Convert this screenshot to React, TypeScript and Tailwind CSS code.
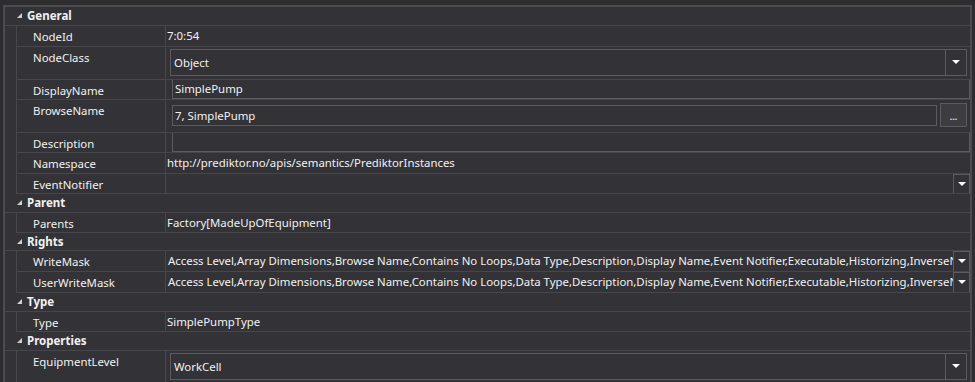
import React from 'react'

const font = { fontFamily: '"Segoe UI", "Noto Sans", "Open Sans", sans-serif' }

function Expander() {
  return (
    <svg width="6" height="6" viewBox="0 0 6 6" className="shrink-0">
      <polygon points="5,0 5,5 0,5" fill="#d0d0d0" />
    </svg>
  )
}

function Arrow() {
  return (
    <svg width="8" height="5" viewBox="0 0 8 5">
      <polygon points="0,0 8,0 4,4" fill="#ffffff" />
    </svg>
  )
}

function Category({ title, h = 'h-[19px]' }: { title: string; h?: string }) {
  return (
    <div className={`flex items-center ${h} border-b border-[#46464b]`}>
      <div className="w-[12px] flex justify-end ml-[6px]">
        <Expander />
      </div>
      <span className="ml-[4px] text-[11.5px] font-bold text-[#f1f1f1]">{title}</span>
    </div>
  )
}

function Row({ label, h = 'h-[21px]', children }: { label: string; h?: string; children?: React.ReactNode }) {
  return (
    <div className={`flex ${h}`}>
      <div className="w-[12px] shrink-0 border-r border-[#46464b]" />
      <div className="flex flex-1 min-w-0 border-b border-[#46464b]">
        <div className="w-[149px] shrink-0 border-r border-[#46464b] pl-[16px] pt-[2px] text-[11.4px] text-[#f1f1f1]">
          {label}
        </div>
        <div className="flex flex-1 min-w-0 overflow-hidden">{children}</div>
      </div>
    </div>
  )
}

function Plain({ text }: { text: string }) {
  return <div className="pl-[1px] flex items-center text-[11.4px] text-[#f1f1f1] whitespace-nowrap">{text}</div>
}

function Combo({ text }: { text: string }) {
  return (
    <div className="flex flex-1 ml-[4px] mr-[3px] mt-[2px] h-[27px] border border-[#5c5c60]">
      <div className="flex-1 flex items-center pl-[3px] pt-[1px] text-[11.4px] text-[#f1f1f1]">{text}</div>
      <div className="w-[21px] flex items-center justify-center border-l border-[#5c5c60]">
        <Arrow />
      </div>
    </div>
  )
}

function TextBox({ text }: { text: string }) {
  return (
    <div className="flex-1 ml-[6px] -mt-[1px] border border-[#5c5c60] flex items-center pl-[2px] text-[11.4px] text-[#f1f1f1]">
      {text}
    </div>
  )
}

function DropText({ text }: { text: string }) {
  return (
    <div className="flex flex-1 min-w-0">
      <div className="flex-1 min-w-0 overflow-hidden whitespace-nowrap pl-[2px] flex items-center text-[11.4px] text-[#f1f1f1]">
        {text}
      </div>
      <div className="w-[17px] shrink-0 flex items-center justify-center border border-[#5c5c60] -mb-[1px]">
        <Arrow />
      </div>
    </div>
  )
}

const mask =
  'Access Level,Array Dimensions,Browse Name,Contains No Loops,Data Type,Description,Display Name,Event Notifier,Executable,Historizing,InverseName'

export default function App() {
  return (
    <div className="w-[975px] h-[382px] overflow-hidden bg-[#2d2d30]" style={font}>
      <div className="h-[5px]" />
      <div className="ml-[3px] w-[969px] h-[377px] border-l-2 border-r-2 border-t-2 border-[#4c4c50] bg-[#333337]">
        <Category title="General" />
        <Row label="NodeId">
          <Plain text="7:0:54" />
        </Row>
        <Row label="NodeClass" h="h-[33px]">
          <Combo text="Object" />
        </Row>
        <Row label="DisplayName" h="h-[20px]">
          <TextBox text="SimplePump" />
        </Row>
        <Row label="BrowseName" h="h-[33px]">
          <div className="flex flex-1 ml-[6px] mr-[3px] mt-[5px] h-[21px] border border-[#5c5c60] items-center pl-[2px] text-[11.4px] text-[#f1f1f1]">
            7, SimplePump
          </div>
          <div className="mt-[3px] mr-[3px] w-[27px] h-[24px] border border-[#5c5c60] bg-[#3c3c41] flex items-center justify-center text-[9px] font-bold text-[#e0e0e0] leading-none pt-[2px]">
            ...
          </div>
        </Row>
        <Row label="Description" h="h-[20px]">
          <TextBox text="" />
        </Row>
        <Row label="Namespace">
          <Plain text="http://prediktor.no/apis/semantics/PrediktorInstances" />
        </Row>
        <Row label="EventNotifier" h="h-[20px]">
          <DropText text="" />
        </Row>
        <Category title="Parent" />
        <Row label="Parents" h="h-[20px]">
          <Plain text="Factory[MadeUpOfEquipment]" />
        </Row>
        <Category title="Rights" h="h-[18px]" />
        <Row label="WriteMask">
          <DropText text={mask} />
        </Row>
        <Row label="UserWriteMask">
          <DropText text={mask} />
        </Row>
        <Category title="Type" />
        <Row label="Type" h="h-[20px]">
          <Plain text="SimplePumpType" />
        </Row>
        <Category title="Properties" />
        <Row label="EquipmentLevel" h="h-[33px]">
          <Combo text="WorkCell" />
        </Row>
      </div>
    </div>
  )
}
